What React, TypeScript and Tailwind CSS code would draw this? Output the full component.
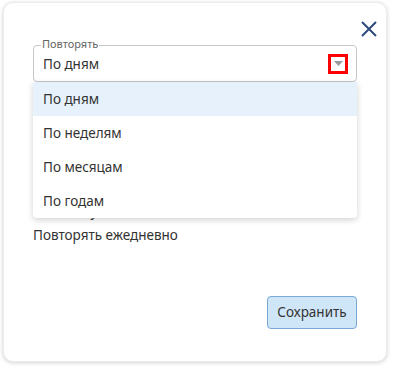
import React from 'react'

const options = ['По дням', 'По неделям', 'По месяцам', 'По годам']

const App = () => {
  return (
    <div className="w-[393px] h-[368px] bg-white pt-[2px] pl-[3px] font-['Noto_Sans',sans-serif] text-[13.5px] text-[#333]">
      <div className="w-[384px] h-[360px] rounded-[10px] bg-white shadow-[0_1px_4px_rgba(0,0,0,0.18)] border border-[#ececec] flex flex-col px-[29px]">
        <div className="flex justify-end pt-[17px] -mr-[21px] h-[42px]">
          <svg className="w-[18px] h-[18px]" viewBox="0 0 18 18" fill="none" stroke="#2d4a7c" strokeWidth="2">
            <path d="M2 2 L16 16 M16 2 L2 16" />
          </svg>
        </div>

        <div className="relative">
          <div className="h-[37px] border border-[#c6c6c6] rounded-[4px] flex items-center justify-between pl-[9px] pr-[8px] pt-[3px]">
            <span className="leading-none">По дням</span>
            <div className="w-[20px] h-[20px] border-[3px] border-[#ff0000] flex items-center justify-center -mt-[3px]">
              <svg width="9" height="5" viewBox="0 0 9 5">
                <path d="M0 0 L9 0 L4.5 5 Z" fill="#9a9a9a" />
              </svg>
            </div>
          </div>
          <span className="absolute left-[8px] -top-[7px] bg-white px-[1px] text-[11px] leading-none text-[#666]">Повторять</span>

          <ul className="absolute left-0 right-0 top-[37px] bg-white rounded-b-[4px] shadow-[0_2px_6px_rgba(0,0,0,0.18)] z-10">
            {options.map((o, i) => (
              <li key={o} className={`h-[34px] flex items-center pl-[10px] ${i === 0 ? 'bg-[#e6f1fb]' : ''}`}>
                {o}
              </li>
            ))}
          </ul>
        </div>

        <div className="mt-[119px] pl-[12px] leading-[20px]">По полугодиям</div>
        <div className="mt-[4px] leading-[20px]">Повторять ежедневно</div>

        <div className="flex justify-end mt-[51px]">
          <button className="w-[90px] h-[33px] bg-[#cfe6f8] border border-[#7aa8d6] rounded-[4px] text-[#333]">Сохранить</button>
        </div>
      </div>
    </div>
  )
}

export default App
